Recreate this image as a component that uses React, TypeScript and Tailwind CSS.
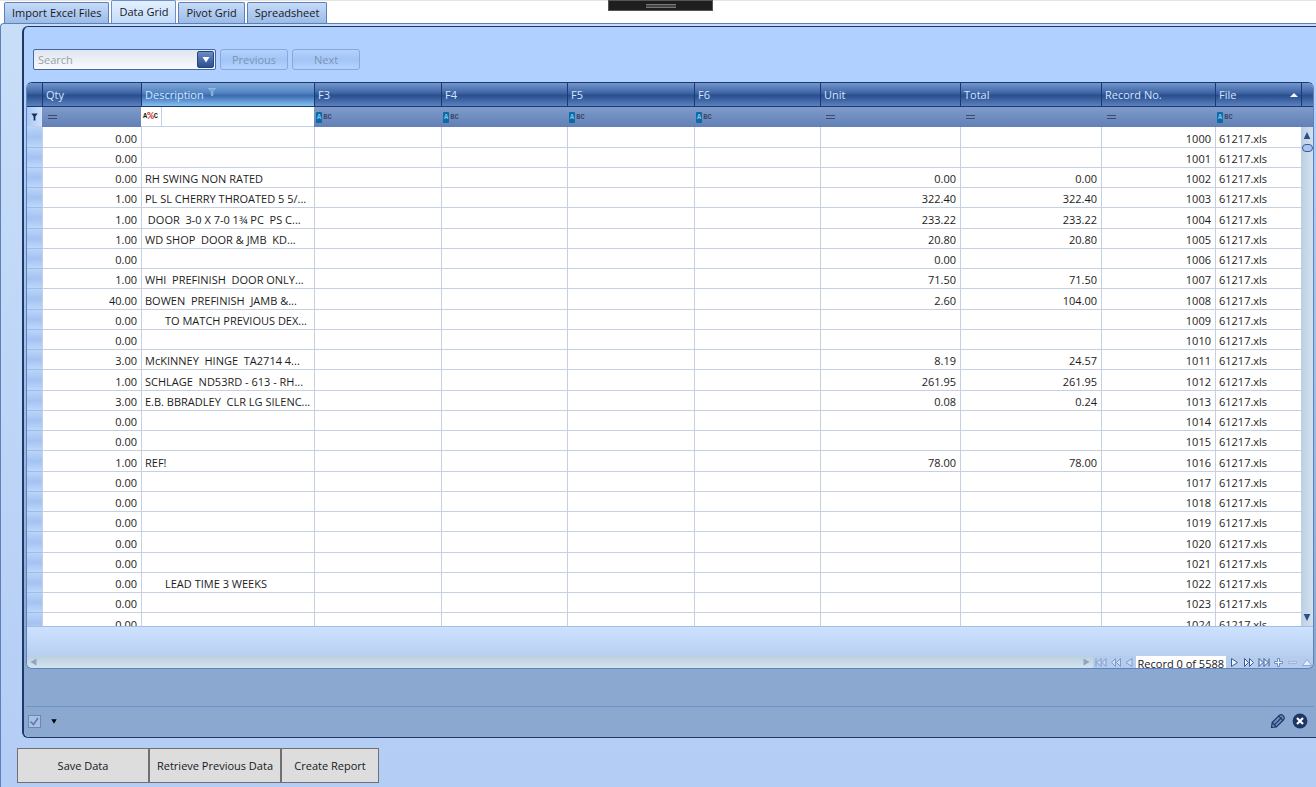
import { ReactNode } from "react";

type Column = { name: string; width: string; filter: "equals" | "text" | "wild"; right?: boolean };

const columns: Column[] = [
  { name: "Qty", width: "w-[99px]", filter: "equals", right: true },
  { name: "Description", width: "w-[173px]", filter: "wild" },
  { name: "F3", width: "w-[127px]", filter: "text" },
  { name: "F4", width: "w-[126px]", filter: "text" },
  { name: "F5", width: "w-[127px]", filter: "text" },
  { name: "F6", width: "w-[126px]", filter: "text" },
  { name: "Unit", width: "w-[140px]", filter: "equals", right: true },
  { name: "Total", width: "w-[141px]", filter: "equals", right: true },
  { name: "Record No.", width: "w-[114px]", filter: "equals", right: true },
  { name: "File", width: "w-[87px]", filter: "text" },
];

type Line = [qty: string, description: string, unit: string, total: string];

const lines: Line[] = [
  ["0.00", "", "", ""],
  ["0.00", "", "", ""],
  ["0.00", "RH SWING NON RATED", "0.00", "0.00"],
  ["1.00", "PL SL CHERRY THROATED 5 5/...", "322.40", "322.40"],
  ["1.00", " DOOR  3-0 X 7-0 1¾ PC  PS C...", "233.22", "233.22"],
  ["1.00", "WD SHOP  DOOR & JMB  KD...", "20.80", "20.80"],
  ["0.00", "", "0.00", ""],
  ["1.00", "WHI  PREFINISH  DOOR ONLY...", "71.50", "71.50"],
  ["40.00", "BOWEN  PREFINISH  JAMB &...", "2.60", "104.00"],
  ["0.00", "       TO MATCH PREVIOUS DEX...", "", ""],
  ["0.00", "", "", ""],
  ["3.00", "McKINNEY  HINGE  TA2714 4...", "8.19", "24.57"],
  ["1.00", "SCHLAGE  ND53RD - 613 - RH...", "261.95", "261.95"],
  ["3.00", "E.B. BBRADLEY  CLR LG SILENC...", "0.08", "0.24"],
  ["0.00", "", "", ""],
  ["0.00", "", "", ""],
  ["1.00", "REF!", "78.00", "78.00"],
  ["0.00", "", "", ""],
  ["0.00", "", "", ""],
  ["0.00", "", "", ""],
  ["0.00", "", "", ""],
  ["0.00", "", "", ""],
  ["0.00", "       LEAD TIME 3 WEEKS", "", ""],
  ["0.00", "", "", ""],
  ["0.00", "", "", ""],
];

const headGradient = "bg-[linear-gradient(#7396cb,#4469a9_40%,#2a4f8f_55%,#5b82bf)]";
const activeGradient = "bg-[linear-gradient(#7fa8d8,#5688c4_40%,#3a6bb0_55%,#86c2f2)]";

function Tab({ children, active = false }: { children: ReactNode; active?: boolean }) {
  return (
    <button
      role="tab"
      aria-selected={active}
      className={
        active
          ? "h-[23px] rounded-t-xs border border-b-0 border-[#6f8fc8] bg-linear-to-b from-[#e4f0ff] to-[#c4dcfa] px-[7px] pt-px"
          : "h-[21px] rounded-t-xs border border-b-0 border-[#5f7fb8] bg-linear-to-b from-[#c6dbf7] to-[#9bbbe8] px-[7px]"
      }
    >
      {children}
    </button>
  );
}

function EqualsIcon() {
  return (
    <svg width="9" height="4" viewBox="0 0 9 4" aria-hidden="true">
      <path d="M0 .5h9M0 3.5h9" stroke="#3d4c6c" strokeWidth="1" />
    </svg>
  );
}

function TextIcon() {
  return (
    <span className="flex h-[11px] items-center font-['Liberation_Mono',monospace] text-[7px] leading-none font-bold text-[#3a4868]">
      <span className="mr-px rounded-[1px] bg-[#0c6aa5] px-px py-[2px] text-[#7cc4ec]">A</span>BC
    </span>
  );
}

function WildIcon() {
  return (
    <span className="flex h-[19px] w-[19px] items-center border-r border-[#c3cfe2] font-['Liberation_Mono',monospace] text-[7px] leading-none font-bold text-[#222]">
      A<span className="text-[11px] text-[#d0342c]">%</span>C
    </span>
  );
}

function Pager({ label, children, w = 12 }: { label: string; children: ReactNode; w?: number }) {
  return (
    <button aria-label={label} className="shrink-0">
      <svg width={w} height="11" viewBox={`0 0 ${w} 11`} fill="none" strokeWidth="1" strokeLinejoin="round">
        {children}
      </svg>
    </button>
  );
}

function DataTable() {
  return (
    <table className="w-full table-fixed border-separate border-spacing-0">
      <colgroup>
        <col className="w-[15px]" />
        {columns.map((c) => (
          <col key={c.name} className={c.width} />
        ))}
      </colgroup>
      <thead>
        <tr className="h-6">
          <th className={`border-b border-[#1c3a72] p-0 ${headGradient}`} />
          {columns.map((c) => (
            <th
              key={c.name}
              className={`border-b border-l border-[#1c3a72] pt-[2px] pr-1 pb-0 pl-[3px] text-left font-normal text-[#d3e6ff] ${
                c.filter === "wild" ? activeGradient : headGradient
              }`}
            >
              <span className="flex items-center">
                {c.name}
                {c.filter === "wild" && (
                  <svg className="mb-2 ml-1" width="8" height="8" viewBox="0 0 8 8" aria-hidden="true">
                    <path d="M.5 .5h7L4.8 3.5V7.5H3.4V3.5Z" fill="#7ba3d6" stroke="#9cc0e8" strokeWidth=".8" />
                  </svg>
                )}
                {c.name === "File" && (
                  <svg className="mb-[2px] ml-auto" width="8" height="4" viewBox="0 0 8 4" aria-hidden="true">
                    <path d="M4 0 8 4H0Z" fill="#f0f7ff" />
                  </svg>
                )}
              </span>
            </th>
          ))}
        </tr>
        <tr className="h-5">
          <td className="border-b border-[#c3cfe2] bg-linear-to-r from-[#a9c8f6] to-[#cfe2fd] p-0">
            <svg className="mx-auto" width="7" height="8" viewBox="0 0 7 8" aria-hidden="true">
              <path d="M.3 .5h6.4L4.4 3.4V7.5H2.6V3.4Z" fill="#16305f" />
            </svg>
          </td>
          {columns.map((c) => (
            <td
              key={c.name}
              className={
                c.filter === "wild"
                  ? "border-b border-[#c3cfe2] bg-white py-0 pr-0 pl-[2px]"
                  : "bg-linear-to-b from-[#7f9bcb] to-[#6280b6] py-0 pr-0 pl-[2px]"
              }
            >
              {c.filter === "equals" && <span className="block pl-1"><EqualsIcon /></span>}
              {c.filter === "text" && <TextIcon />}
              {c.filter === "wild" && <WildIcon />}
            </td>
          ))}
        </tr>
      </thead>
      <tbody className="text-[#1c1c1c]">
        {lines.map(([qty, description, unit, total], i) => {
          const cells = [qty, description, "", "", "", "", unit, total, String(1000 + i), "61217.xls"];
          return (
            <tr key={i} className="h-5 nth-[4n+1]:h-[21px]">
              <td className="border-b border-[#9fbce8] bg-linear-to-b from-[#bad3f8] via-[#a4c3f2] to-[#bdd6fb] p-0" />
              {cells.map((value, j) => (
                <td
                  key={j}
                  className={`overflow-hidden border-b border-l border-[#c5d0e3] bg-white pt-[2px] pr-1 pb-0 pl-[3px] leading-[17px] whitespace-pre ${
                    columns[j].right ? "text-right" : ""
                  }`}
                >
                  {value}
                </td>
              ))}
            </tr>
          );
        })}
      </tbody>
    </table>
  );
}

export default function App() {
  return (
    <div className="flex min-h-screen flex-col bg-white font-['Open_Sans','Noto_Sans',sans-serif] text-[11px] text-[#16181d]">
      <div className="absolute top-0 left-1/2 ml-[-50px] flex h-[11px] w-[105px] items-center justify-center border border-[#555] bg-[#1e1e1e]">
        <span className="h-1 w-[30px] border-y border-[#777] bg-[#444]" />
      </div>
      <div role="tablist" className="flex h-[23px] items-end gap-[2px] pl-1 shadow-[inset_0_1px_#e4e4e4]">
        <Tab>Import Excel Files</Tab>
        <Tab active>Data Grid</Tab>
        <Tab>Pivot Grid</Tab>
        <Tab>Spreadsheet</Tab>
      </div>

      <main className="flex grow flex-col rounded-tl border-t border-l border-[#5f7fb8] bg-linear-to-b from-[#c8def8] to-[#b3cdf5] pt-[2px]">
        <section className="ml-[21px] flex flex-col rounded-l-md border-y border-l-2 border-[#1f3868] bg-[#b0d1ff] pt-[22px]">
          <div className="flex gap-1 pl-[9px]">
            <div className="flex h-[21px] w-[183px] items-center rounded-xs border border-[#4666a4] bg-linear-to-b from-[#dfe6f0] to-[#f8fafd] pr-px">
              <input aria-label="Search" placeholder="Search" className="min-w-0 grow bg-transparent pt-[2px] pl-1 outline-none placeholder:text-[#9a9fa8]" />
              <button aria-label="Search options" className="flex h-[17px] w-[17px] items-center justify-center rounded-xs border border-[#27457f] bg-linear-to-b from-[#6a8cc6] to-[#2b4f90]">
                <svg width="8" height="6" viewBox="0 0 8 6"><path d="M.5 0h7L4 5.5Z" fill="#fff" /></svg>
              </button>
            </div>
            <button disabled className="h-[21px] w-[68px] rounded-[3px] border border-[#85a8de] bg-linear-to-b from-[#b4d2fc] via-[#a2c5f6] to-[#b4d4ff] pt-[2px] text-[#7c93b8]">Previous</button>
            <button disabled className="h-[21px] w-[68px] rounded-[3px] border border-[#85a8de] bg-linear-to-b from-[#b4d2fc] via-[#a2c5f6] to-[#b4d4ff] pt-[2px] text-[#7c93b8]">Next</button>
          </div>

          <div className="mt-3 flex flex-col rounded-bl-md bg-linear-to-b from-[#b0d1ff] via-[#9dbce6] to-[#8ba8d0] to-85% pr-[2px] pl-[2px]">
            <div className="overflow-hidden rounded-md border border-[#5f82bd] border-t-[#1c3a72]">
              <div className="flex h-[543px] overflow-hidden">
                <div className="min-w-0 grow"><DataTable /></div>
                <div className="flex w-3 shrink-0 flex-col">
                  <div className={`h-6 shrink-0 border-b border-l border-[#1c3a72] ${headGradient}`} />
                  <div className="h-5 shrink-0 bg-linear-to-b from-[#7f9bcb] to-[#6280b6]" />
                  <div className="flex grow flex-col items-center bg-linear-to-r from-[#bccfe2] to-[#d3e1ee] pt-1 pb-1">
                    <button aria-label="Scroll up"><svg width="8" height="9" viewBox="0 0 8 9"><path d="M4 1 7.3 8H.7Z" fill="#2d4c8c" /></svg></button>
                    <svg className="mt-1" width="11" height="8" viewBox="0 0 11 8" aria-hidden="true">
                      <rect x=".5" y=".5" width="10" height="7" rx="3.5" fill="#a9c5ee" stroke="#3c5a96" />
                    </svg>
                    <button aria-label="Scroll down" className="mt-auto"><svg width="8" height="9" viewBox="0 0 8 9"><path d="M.7 1h6.6L4 8Z" fill="#2d4c8c" /></svg></button>
                  </div>
                </div>
              </div>
              <div className="h-[30px] border-t border-[#9dbfee] bg-linear-to-b from-[#cde2ff] to-[#b8cff0]" />
              <div className="flex h-3 items-center bg-[#b5ccec]">
                <div className="flex h-3 grow items-center justify-between bg-linear-to-b from-[#bccfdf] to-[#d3e3ef] pr-[3px] pl-[3px]">
                  <button aria-label="Scroll left"><svg width="7" height="8" viewBox="0 0 7 8"><path d="M6.5 .5v7L.5 4Z" fill="#8fa3c3" /></svg></button>
                  <button aria-label="Scroll right"><svg width="7" height="8" viewBox="0 0 7 8"><path d="M.5 .5v7L6.5 4Z" fill="#8fa3c3" /></svg></button>
                </div>
                <div className="flex h-3 items-center gap-[3px] pl-[2px]">
                  <Pager label="First record"><path d="M1 1.5v8M6 1.5v8L2 5.5ZM11 1.5v8L7 5.5Z" stroke="#7f9acb" fill="#c9dcf8" /></Pager>
                  <Pager label="Previous page"><path d="M5.5 1.5v8L1.5 5.5ZM10.5 1.5v8L6.5 5.5Z" stroke="#7f9acb" fill="#c9dcf8" /></Pager>
                  <Pager label="Previous record" w={8}><path d="M7 1.5v8L1 5.5Z" stroke="#7f9acb" fill="#c9dcf8" /></Pager>
                  <span className="h-3 bg-white px-[2px] leading-4 whitespace-nowrap text-[#16181d]">Record 0 of 5588</span>
                  <Pager label="Next record" w={11}><path d="M2.5 1.5v8L8.5 5.5Z" stroke="#3b5a9b" fill="#eaf3ff" /></Pager>
                  <Pager label="Next page"><path d="M1.5 1.5v8L5.5 5.5ZM6.5 1.5v8L10.5 5.5Z" stroke="#3b5a9b" fill="#eaf3ff" /></Pager>
                  <Pager label="Last record"><path d="M1 1.5v8L5 5.5ZM6 1.5v8L10 5.5ZM11 1.5v8" stroke="#3b5a9b" fill="#eaf3ff" /></Pager>
                  <Pager label="Add record" w={11}><path d="M4.5 1.5h2v3h3v2h-3v3h-2v-3h-3v-2h3Z" stroke="#6f8dc6" fill="#eaf3ff" /></Pager>
                  <Pager label="Delete record" w={11}><path d="M1.5 4.5h8v2h-8Z" stroke="#9db5de" fill="#c9dcf8" /></Pager>
                  <Pager label="Edit record"><path d="M6 2.5 10.5 8.5H1.5Z" stroke="#8fa9d6" fill="#e4f0ff" /></Pager>
                </div>
              </div>
            </div>
            <div className="mt-[37px] flex h-[31px] items-center border-t border-[#6f91c6] pr-[6px] pb-[2px] pl-[2px]">
              <label className="flex h-[13px] w-[13px] items-center justify-center border border-[#6c87b5] bg-[#a9c0e2]">
                <input type="checkbox" defaultChecked aria-label="Filter enabled" className="peer sr-only" />
                <svg className="invisible peer-checked:visible" width="11" height="11" viewBox="0 0 11 11" fill="none" stroke="#5b79ae" strokeWidth="1.5"><path d="M1.5 5.5 4.5 8.5 9 2" /></svg>
              </label>
              <button aria-label="Recent filters" className="ml-[10px]"><svg width="6" height="5" viewBox="0 0 6 5"><path d="M.3 .3h5.4L3 4.7Z" fill="#000" /></svg></button>
              <button aria-label="Edit filter" className="ml-auto">
                <svg width="16" height="16" viewBox="0 0 16 16" fill="#6f8cc0" stroke="#1c3668" strokeWidth="1.2" strokeLinejoin="round">
                  <path d="M1.5 14.5 2.2 9.5 9.5 2.2Q11 1 12.5 2.2L13.8 3.5Q15 5 13.8 6.5L6.5 13.8Z" />
                  <path d="M2.2 9.5 6.5 13.8M4.6 11.6 11.8 4.4M8.6 3.2 12.8 7.4" fill="none" />
                </svg>
              </button>
              <button aria-label="Clear filter" className="ml-[6px]">
                <svg width="16" height="16" viewBox="0 0 16 16"><circle cx="8" cy="8" r="7.4" fill="#1c3668" /><path d="M5 5l6 6M11 5l-6 6" stroke="#fff" strokeWidth="2.2" /></svg>
              </button>
            </div>
          </div>
        </section>

        <div className="mt-[10px] ml-4 flex pb-1">
          <button className="h-[35px] w-[132px] border border-[#707070] bg-[#dddddd] pt-px">Save Data</button>
          <button className="h-[35px] w-[132px] border border-[#707070] bg-[#dddddd] pt-px">Retrieve Previous Data</button>
          <button className="h-[35px] w-[98px] border border-[#707070] bg-[#dddddd] pt-px">Create Report</button>
        </div>
      </main>
    </div>
  );
}
